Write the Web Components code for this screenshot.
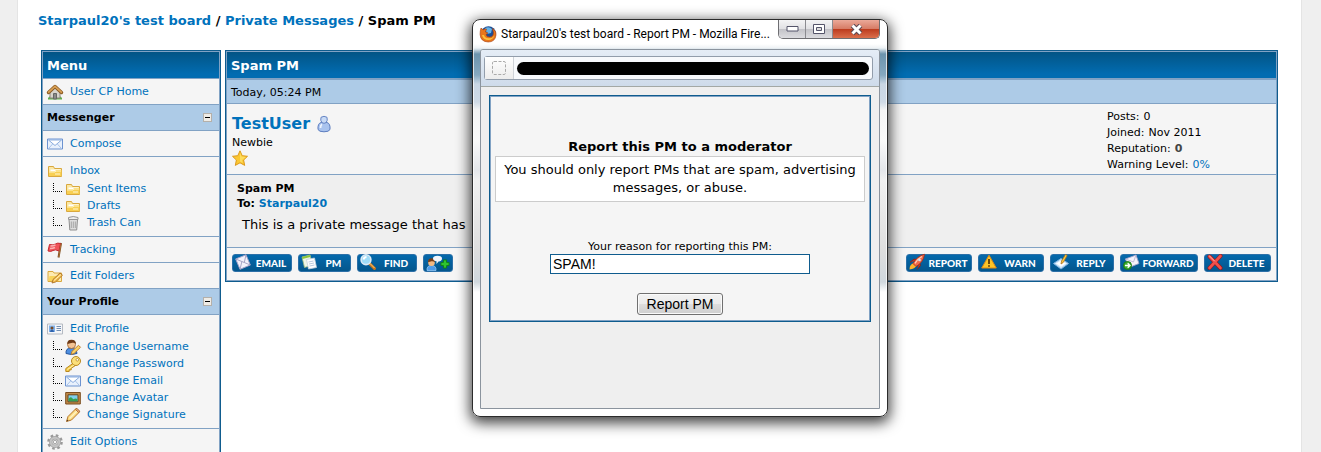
<!DOCTYPE html>
<html lang="en">
<head>
<meta charset="utf-8">
<meta name="viewport" content="width=device-width, initial-scale=1">
<title>Starpaul20's test board - Spam PM</title>
<style>
  body { margin: 0; background: #efefef; }
</style>
</head>
<body>
<mb-page>
  <mb-breadcrumb slot="nav">
    <a href="#board">Starpaul20's test board</a>
    <a href="#pms">Private Messages</a>
    <span>Spam PM</span>
  </mb-breadcrumb>

  <mb-panel slot="side">
    <span slot="title">Menu</span>
    <mb-cell><mb-link icon="home" href="#usercp">User CP Home</mb-link></mb-cell>
    <mb-section>Messenger</mb-section>
    <mb-cell><mb-link icon="mail" href="#compose">Compose</mb-link></mb-cell>
    <mb-cell tree>
      <mb-link icon="folder" href="#inbox">Inbox</mb-link>
      <mb-link sub icon="folder" href="#sent">Sent Items</mb-link>
      <mb-link sub icon="folder" href="#drafts">Drafts</mb-link>
      <mb-link sub icon="trash" href="#trash">Trash Can</mb-link>
    </mb-cell>
    <mb-cell><mb-link icon="flag" href="#tracking">Tracking</mb-link></mb-cell>
    <mb-cell><mb-link icon="folderEdit" href="#folders">Edit Folders</mb-link></mb-cell>
    <mb-section>Your Profile</mb-section>
    <mb-cell tree>
      <mb-link icon="card" href="#profile">Edit Profile</mb-link>
      <mb-link sub icon="userEdit" href="#username">Change Username</mb-link>
      <mb-link sub icon="key" href="#password">Change Password</mb-link>
      <mb-link sub icon="mail" href="#email">Change Email</mb-link>
      <mb-link sub icon="picture" href="#avatar">Change Avatar</mb-link>
      <mb-link sub icon="pencil" href="#signature">Change Signature</mb-link>
    </mb-cell>
    <mb-cell><mb-link icon="gear" href="#options">Edit Options</mb-link></mb-cell>
  </mb-panel>

  <mb-panel slot="main">
    <span slot="title">Spam PM</span>
    <mb-post date="Today, 05:24 PM" author="TestUser" rank="Newbie" subject="Spam PM" to="Starpaul20">
      This is a private message that has
      <mb-action slot="left" icon="letter" style="--w: 60px">EMAIL</mb-action>
      <mb-action slot="left" icon="notes" style="--w: 53px">PM</mb-action>
      <mb-action slot="left" icon="find" style="--w: 60px">FIND</mb-action>
      <mb-action slot="left" icon="buddyAdd" name="Add to buddy list" style="--w: 30px"></mb-action>
      <mb-action slot="right" icon="rocket" style="--w: 66px">REPORT</mb-action>
      <mb-action slot="right" icon="warn" style="--w: 66px">WARN</mb-action>
      <mb-action slot="right" icon="reply" style="--w: 64px">REPLY</mb-action>
      <mb-action slot="right" icon="forward" style="--w: 78px">FORWARD</mb-action>
      <mb-action slot="right" icon="cross" style="--w: 67px">DELETE</mb-action>
    </mb-post>
  </mb-panel>
</mb-page>

<mb-window>
  <span slot="title">Starpaul20's test board - Report PM - Mozilla Fire...</span>
  <mb-report-form></mb-report-form>
</mb-window>

<script>
(function () {
  'use strict';

  // 16x16 artwork, keyed by icon name
  const ICONS = {
    home: `
      <path d="M1 14q2-3 4-1h6q2-2 4 1v1.500H1z" fill="#5fae4c"/>
      <path d="M3 8l5-5 5 5v6H3z" fill="#d8d4cc" stroke="#8b857b"/>
      <path d="M6.500 9.500h3V15h-3z" fill="#8b8a88" stroke="#666"/>
      <path d="M1.500 8.500L8 2.500l6.500 6" fill="none" stroke="#8a5a22" stroke-width="3.400" stroke-linejoin="round" stroke-linecap="round"/>
      <path d="M1.700 8.200L8 2.400l6.300 5.800" fill="none" stroke="#d9a055" stroke-width="1.800" stroke-linecap="round"/>`,
    mail: `
      <path d="M.5 3h15v10H.5z" fill="#e9f1fc" stroke="#6c93d0"/>
      <path d="M2 12l4.500-5M14 12L9.500 7" stroke="#a9c3e8" fill="none"/>
      <path d="M1.500 4l6.500 5.500L14.500 4z" fill="#fff" stroke="#8badde"/>`,
    folder: `
      <path d="M1.500 3.500h5l1 2h7v8h-13z" fill="#fbe7a2" stroke="#d9a83e"/>
      <path d="M3.500 6.500h10v2h-10z" fill="#fff"/>
      <path d="M2 8.500h6l1-1.500h5.500v6H2z" fill="#f8cf52"/>
      <path d="M2 9h6l1-1h5" stroke="#fff3c0" fill="none"/>
      <path d="M8 11h5" stroke="#fff6d0"/>`,
    trash: `
      <path d="M4 4.500h8.500l-.8 10.500H4.800z" fill="#dedede" stroke="#8f8f8f"/>
      <path d="M6.300 6.500v6.500M8.300 6.500v6.500M10.300 6.500v6.500" stroke="#a4a4a4"/>
      <path d="M3.500 2.500q4.700-2 9.500 0v2H3.500z" fill="#ededed" stroke="#969696"/>`,
    flag: `
      <path d="M14 1L11.500 15.500" stroke="#7c4a1c" stroke-width="2"/>
      <path d="M13.500 1.500q-3-1-5 .5t-6 .5L1 9q3 1 5-.5t6 .5z" fill="#f0545a" stroke="#c32a30"/>
      <path d="M3.500 4q3 0 5-1.200M3 6.500q3 0 5-1" stroke="#fbb1b3" stroke-width="1.400" fill="none"/>
      <path d="M14 2l-2.300 13" stroke="#b27a3c" stroke-width=".8"/>`,
    folderEdit: `
      <path d="M1 3.500h5l1 1.500h7.500v8.500H1z" fill="#fdeab0" stroke="#d9a83e"/>
      <path d="M2.500 8h10l-1 5H1.500z" fill="#f8d45c"/>
      <path d="M5 15l1-3.500L13 5l2.500 2.200L8.500 14z" fill="#f6c04f" stroke="#a9702a" stroke-width=".9"/>
      <path d="M7 12.500L14 6.500" stroke="#fff0b8"/>`,
    card: `
      <path d="M.5 3h15v10H.5z" fill="#f5f6f8" stroke="#b5bac2"/>
      <path d="M2 4.500h6v6.500H2z" fill="#7fb1ea"/>
      <circle cx="5" cy="7" r="1.500" fill="#7a4b23"/>
      <path d="M3 11q0-2.500 2-2.500T7 11z" fill="#2f62ad"/>
      <path d="M9.500 5.500h4.500M9.500 7.500h4.500M9.500 9.500h4.500" stroke="#7590b4"/>`,
    userEdit: `
      <path d="M1 14.500q-.5-5.500 5-5.500t6 5.500q-5.500 2-11 0z" fill="#4c8ee0" stroke="#28589f"/>
      <circle cx="6.500" cy="5.500" r="4" fill="#f3c393" stroke="#a0622c" stroke-width=".8"/>
      <path d="M2.300 5Q2 .7 6.500.7T11 5Q9.500 3.500 7.500 3.700T2.300 5z" fill="#6f3b18"/>
      <path d="M6 15.500l1-3.200 6.500-6 2 2-6.400 6.200z" fill="#fbd264" stroke="#b2742a" stroke-width=".9"/>`,
    key: `
      <path d="M8.500 7L.8 12.500v3h3.400v-1.600h2v-1.600l4.500-3z" fill="#f7cf4d" stroke="#b98820"/>
      <circle cx="11" cy="5" r="4.500" fill="#fbe07a" stroke="#b98820"/>
      <circle cx="12.300" cy="3.800" r="1.300" fill="#fff" stroke="#b98820" stroke-width=".8"/>
      <path d="M2.500 13.500L9 9" stroke="#fff2b5"/>`,
    picture: `
      <path d="M.7 2.500h14.600v11.500H.7z" fill="#c08a48" stroke="#7b4e20"/>
      <path d="M3 4.800h10v7H3z" fill="#7ed0ee" stroke="#6b4318"/>
      <path d="M3.500 9q2-3 4-.5l1 .8q2-1.800 4 0v2h-9z" fill="#35a052"/>`,
    pencil: `
      <path d="M1.500 14.500L3 9.500 11 1.500l3.500 3.500L6.500 13z" fill="#fbd97c" stroke="#b5772e"/>
      <path d="M4.500 11.500l8-8" stroke="#fff3c4" stroke-width="1.400"/>
      <path d="M10.500 2.500l1.300-1.300 3 3-1.300 1.300z" fill="#e8aa70" stroke="#a5622b" stroke-width=".8"/>
      <path d="M1.500 14.500l.7-2 1.300 1.300z" fill="#503a28"/>`,
    gear: `
      <circle cx="8" cy="8" r="6.500" fill="none" stroke="#999" stroke-width="2.600" stroke-dasharray="2.550"/>
      <circle cx="8" cy="8" r="4.300" fill="none" stroke="#a3a3a3" stroke-width="3.400"/>
      <circle cx="8" cy="8" r="4.300" fill="none" stroke="#c4c4c4" stroke-width="2"/>
      <circle cx="8" cy="8" r="1.800" fill="#f5f5f5" stroke="#8c8c8c" stroke-width=".8"/>`,
    user: `
      <path d="M2 13.500q-.5-6 3-7h6q3.500 1 3 7-1 2.300-6 2.300T2 13.500z" fill="#a9c3ee" stroke="#5c7dbf"/>
      <path d="M5 1.300q3-2 6 0 1 3.200-1 5.400-2 1.200-4 0Q4 4.500 5 1.300z" fill="#c9dbf6" stroke="#6685c4"/>
      <path d="M4.500 12q0-3 1.500-3.800" stroke="#eef4fd" stroke-width="1.800" fill="none"/>`,
    star: `
      <path d="M8 .8l2.200 4.900 5.300.6-3.900 3.700 1.100 5.400L8 12.800l-4.700 2.600 1.100-5.400L.5 6.300l5.300-.6z" fill="#fbc832" stroke="#dd9a1c"/>
      <path d="M8 2.500l1.500 4 4.500.5-4 3 .8 3L8 11.500z" fill="#fddc5e"/>`,
    firefox: `
      <circle cx="8.500" cy="7.500" r="7.300" fill="#1d4e96"/>
      <path d="M5 2q4-2 7 1l-1 4-4 1z" fill="#62b2e8"/>
      <path d="M1 2l2 2Q4.500 2.500 6.500 3L5.500 6l2.500 1-2 1.500q.5 2.500 3.500 2.500 4 0 4-4.500L12.500 2.500q3.800 2 3.500 6.500-.8 7-7.800 7Q.5 15.700.1 8.500 0 5 1 2z" fill="#e8761b" stroke="#a63e10" stroke-width=".6"/>
      <path d="M2 9q1 5 6.500 5 4.500-.2 6-4.500-2 3-6 2.700T4 9z" fill="#fbc03a"/>`,
    letter: `
      <path d="M.7 5L11 .8 15.300 11 5 15.300z" fill="#f4f2fb" stroke="#a5a2c8"/>
      <path d="M.7 5l8.600 3.500L11 .8M5 15.300l1.800-7.500M15.300 11L9.300 8.500" fill="none" stroke="#9390b8" stroke-width=".8"/>`,
    notes: `
      <path d="M1 3l8-2 2.500 10-8 2.500z" fill="#eef5e6" stroke="#9dbb7c" stroke-width=".8"/>
      <path d="M1 3l8-2 .5 2-8 2z" fill="#8cc63e"/>
      <path d="M5.500 5.500L13.500 4l2 9.500-8 1.500z" fill="#fff" stroke="#c4d0dc" stroke-width=".8"/>
      <path d="M7.500 8l5-1M8 10l5-1M8.500 12l5-1" stroke="#a9bed6" stroke-width=".8"/>`,
    find: `
      <path d="M9.500 9.500l5 5" stroke="#c9771d" stroke-width="3" stroke-linecap="round"/>
      <path d="M10 9.500l4.500 4.500" stroke="#fbd07c" stroke-width="1"/>
      <circle cx="6" cy="5.700" r="4.900" fill="#9fdcf8" stroke="#dceaf6" stroke-width="1.600"/>
      <path d="M3.500 5.500Q4 3 6.500 3" stroke="#fff" stroke-width="1.800" fill="none"/>`,
    buddyAdd: `
      <path d="M1 15.500q-.5-5 4.500-5t4.500 5z" fill="#4d9bea" stroke="#9fd0fa" stroke-width=".7"/>
      <circle cx="5.500" cy="7.800" r="3.300" fill="#f3b983"/>
      <path d="M2 7.300q0-4 3.500-4T9 7.300Q7 5.800 5.500 6.300T2 7.300z" fill="#7a3d16"/>
      <path d="M7 3.500Q7 .8 11.500.8T16 3.500 12.500 6.500L10.500 9V6.300Q7 5.800 7 3.500z" fill="#f2f6fc"/>`,
    rocket: `
      <path d="M.5 15.500Q.5 10 5 9l2.500 2.500q-1.500 3.500-7 4z" fill="#ffb32c"/>
      <path d="M1 8.500L5 5l3 1M8 15.500l3.500-4-1-2.500" fill="#c9301c" stroke="#8d1d10" stroke-width=".8"/>
      <path d="M4 9.500Q8 2 15.500.3 14.500 8.500 7 12.500z" fill="#f2694a" stroke="#a32c16" stroke-width=".8"/>
      <path d="M6 9.300Q9 4.500 13 2.500" stroke="#ffd1b8" stroke-width="1.300" fill="none"/>
      <circle cx="10.500" cy="6" r="1.300" fill="#cfe7fa"/>`,
    warn: `
      <path d="M8 1.200L15.300 14H.7z" fill="#fdc527" stroke="#e08a12" stroke-linejoin="round"/>
      <path d="M8 5v5M8 11.200v1.600" stroke="#5b3a08" stroke-width="1.800"/>`,
    reply: `
      <path d="M.5 9.500l7.500-5 7.500 5L8 15z" fill="#c8e2f8" stroke="#7db0dd"/>
      <path d="M3 9.500L8 6.500l5 3-5 3.300z" fill="#fff"/>
      <path d="M12.500.5L8.500 7 8 10l2.200-1.500L14.200 1.500z" fill="#fbc842" stroke="#a96e1a" stroke-width=".8"/>`,
    forward: `
      <path d="M2.500 5L13 1l3 8.500-10 4z" fill="#f4f2fb" stroke="#a5a2c8" stroke-width=".9"/>
      <path d="M2.500 5l8 3L13 1" fill="none" stroke="#b9b6d4" stroke-width=".9"/>
      <circle cx="4.500" cy="11.500" r="4" fill="#3cae2e" stroke="#1c7a15"/>
      <path d="M2 11.500h4.500M4.700 9.300l2.200 2.200-2.200 2.200" stroke="#fff" stroke-width="1.400" fill="none"/>`,
    cross: `
      <path d="M2.500 2.500l11 11.500M13.500 2L2.500 14" stroke="#a01616" stroke-width="4" stroke-linecap="round"/>
      <path d="M2.500 2.500l11 11.500M13.500 2L2.500 14" stroke="#f0504c" stroke-width="2.600" stroke-linecap="round"/>
      <path d="M2.500 2l5 5" stroke="#ffb4ae" stroke-width="1" stroke-linecap="round"/>`,
    plus: `
      <path d="M5.500 1.500h5v4h4v5h-4v4h-5v-4h-4v-5h4z" fill="#2fc52f" stroke="#0f7f18" stroke-width="1.500"/>`
  };

  const define = (name, markup, setup) => {
    const tpl = document.createElement('template');
    tpl.innerHTML = markup;
    customElements.define(name, class extends HTMLElement {
      constructor() {
        super();
        this.attachShadow({ mode: 'open' }).appendChild(tpl.content.cloneNode(true));
      }
      connectedCallback() { if (setup) setup(this, this.shadowRoot); }
    });
  };

  define('mb-icon', `
    <style>
      :host { display: inline-block; width: 16px; height: 16px; flex: none; }
      svg { display: block; width: 100%; height: 100%; overflow: visible; }
    </style>
    <svg viewBox="0 0 16 16" fill="none" aria-hidden="true"></svg>`,
  (el, root) => {
    root.querySelector('svg').innerHTML = ICONS[el.getAttribute('name')] || '';
  });

  define('mb-page', `
    <style>
      :host {
        display: block;
        box-sizing: border-box;
        height: 100vh;
        overflow: hidden;
        margin: 0 19px 0 17px;
        padding: 13px 23px 0;
        background: #fff;
        border: 1px solid #e4e4e4;
        border-width: 0 1px;
        font: 11px/16px "DejaVu Sans", Verdana, sans-serif;
        color: #000;
      }
      .cols {
        display: grid;
        grid-template-columns: 180px minmax(0, 1fr);
        gap: 4px;
        align-items: start;
        margin-top: 21px;
      }
    </style>
    <slot name="nav"></slot>
    <div class="cols">
      <nav><slot name="side"></slot></nav>
      <main><slot name="main"></slot></main>
    </div>`);

  define('mb-breadcrumb', `
    <style>
      :host { display: block; margin-left: -3px; font-size: 13px; font-weight: bold; line-height: 16px; }
      ::slotted(a) { color: #0072bc; text-decoration: none; }
      ::slotted(a)::after { content: " /"; color: #000; }
    </style>
    <slot></slot>`);

  define('mb-panel', `
    <style>
      :host {
        display: grid;
        gap: 1px;
        padding: 1px;
        background: #81a2c4;
        border: 1px solid #0f5c8e;
      }
      h2 {
        margin: 0;
        padding: 6px 4px 4px;
        font-size: 13px;
        line-height: 16px;
        color: #fff;
        background: linear-gradient(#025485, #026cb1 85%);
      }
    </style>
    <h2><slot name="title"></slot></h2>
    <slot></slot>`);

  define('mb-section', `
    <style>
      :host {
        display: flex;
        align-items: center;
        justify-content: space-between;
        padding: 0 7px 0 4px;
        height: 25px;
        background: #adcbe7;
        font-weight: bold;
      }
      button {
        display: grid;
        place-items: center;
        box-sizing: border-box;
        width: 9px;
        height: 9px;
        padding: 0;
        border: 1px solid #b4b0aa;
        background: #efece6;
      }
      button::before { content: ""; width: 5px; height: 1px; background: #000; }
    </style>
    <slot></slot>
    <button type="button" aria-label="Collapse"></button>`);

  define('mb-cell', `
    <style>
      :host { display: block; padding: 4px 4px 3px; background: #f5f5f5; }
      :host([tree]) { padding-top: 5px; padding-bottom: 5px; }
    </style>
    <slot></slot>`);

  define('mb-link', `
    <style>
      :host { display: flex; align-items: center; height: 18px; }
      :host([sub]) { height: 17px; padding-left: 6px; }
      a { display: flex; align-items: center; gap: 7px; color: #0072bc; text-decoration: none; }
      :host([sub]) a { gap: 6px; }
      .twig { display: none; width: 8px; height: 8px; margin: 0 3px 3px 0; border: 1px dotted #000; border-width: 0 0 1px 1px; }
      :host([sub]) .twig { display: block; }
    </style>
    <span class="twig"></span>
    <a><span class="art"></span><span><slot></slot></span></a>`,
  (el, root) => {
    root.querySelector('a').href = el.getAttribute('href');
    root.querySelector('.art').innerHTML = `<mb-icon name="${el.getAttribute('icon')}" style="display: block"></mb-icon>`;
  });

  define('mb-action', `
    <style>
      :host { display: block; width: var(--w); }
      button {
        display: flex;
        align-items: center;
        width: 100%;
        height: 18px;
        padding: 0 0 0 2px;
        border: 1px solid #2c70a8;
        border-radius: 3px;
        background: linear-gradient(#0469ac, #04568c);
        color: #fff;
        font: 900 10px/16px Lato, "Open Sans", sans-serif;
      }
      mb-icon { margin-top: -3px; }
      .label { flex: 1; text-align: center; }
      .plus { display: none; width: 10px; height: 10px; margin: 2px 0 0 -2px; }
      :host([name]) .plus { display: block; }
      :host([name]) .label { display: none; }
      :host([name]) mb-icon:not(.plus) { margin-top: 0; }
    </style>
    <button type="button">
      <span class="art"></span>
      <span class="label"><slot></slot></span>
    </button>`,
  (el, root) => {
    const name = el.getAttribute('icon');
    root.querySelector('.art').outerHTML = `<mb-icon name="${name}"></mb-icon><mb-icon class="plus" name="plus"></mb-icon>`;
    if (el.hasAttribute('name')) root.querySelector('button').setAttribute('aria-label', el.getAttribute('name'));
  });

  define('mb-post', `
    <style>
      :host { display: grid; gap: 1px; }
      a { color: #0072bc; text-decoration: none; }
      .date { padding: 5px 4px 3px; background: #adcbe7; border-top: 1px solid #81a2c4; line-height: 15px; }
      .author { display: flex; justify-content: space-between; padding: 5px 5px 1px; background: #f5f5f5; }
      .who { display: flex; align-items: center; gap: 6px; height: 30px; margin-bottom: -4px; font-size: 16px; font-weight: bold; }
      .rank { line-height: 15px; }
      .stars { display: block; }
      .stats { width: 164px; margin: 0; }
      .stats div { display: flex; gap: 4px; }
      dd { margin: 0; }
      dd b { color: #444; }
      .body { padding: 6px 10px 14px; background: #efefef; line-height: 15px; }
      .body strong { display: block; }
      .text { margin: 6px 5px 0; font-size: 13px; line-height: 16px; }
      .tools { display: flex; justify-content: space-between; padding: 6px 5px 8px; background: #f5f5f5; }
      .set { display: flex; gap: 6px; }
    </style>
    <div class="date"></div>
    <div class="author">
      <div>
        <div class="who"><a class="name" href="#user"></a><mb-icon name="user"></mb-icon></div>
        <div class="rank"></div>
        <mb-icon class="stars" name="star"></mb-icon>
      </div>
      <dl class="stats">
        <div><dt>Posts:</dt><dd>0</dd></div>
        <div><dt>Joined:</dt><dd>Nov 2011</dd></div>
        <div><dt>Reputation:</dt><dd><b>0</b></dd></div>
        <div><dt>Warning Level:</dt><dd><a href="#warnings">0%</a></dd></div>
      </dl>
    </div>
    <div class="body">
      <strong class="subject"></strong>
      <strong>To: <a class="to" href="#to"></a></strong>
      <div class="text"><slot></slot></div>
    </div>
    <div class="tools">
      <div class="set"><slot name="left"></slot></div>
      <div class="set"><slot name="right"></slot></div>
    </div>`,
  (el, root) => {
    const fill = (sel, attr) => { root.querySelector(sel).textContent = el.getAttribute(attr); };
    fill('.date', 'date');
    fill('.name', 'author');
    fill('.rank', 'rank');
    fill('.subject', 'subject');
    fill('.to', 'to');
  });

  define('mb-window', `
    <style>
      :host {
        position: absolute;
        top: 19px;
        left: 472px;
        box-sizing: border-box;
        width: 416px;
        padding: 0 7px 7px;
        border: 1px solid #2b2b2b;
        border-radius: 8px;
        background: linear-gradient(#fff 24px, #eef2f5 28px, #6c94ad 34px, #85a8c0 55px, #c9d6e4 64px, #cfdae6 82px, #f4f4f4 90px, #fafafa 120px, #e4e6ea 150px, #f0f0f0 160px, #dedede 230px, #d0d8de 262px, #fff 272px);
        box-shadow: 0 4px 14px 2px rgba(0, 0, 0, .75), inset 0 0 0 1px rgba(255, 255, 255, .7);
        color: #000;
      }
      header { display: flex; align-items: flex-start; height: 29px; font: 12px/28px Roboto, "Open Sans", sans-serif; }
      header mb-icon { margin: 6px 5px 0 0; }
      .title { flex: 1; min-width: 0; white-space: nowrap; }
      .controls { display: flex; border: 1px solid #6e6e72; border-top: 0; border-radius: 0 0 5px 5px; overflow: hidden; }
      button {
        display: grid;
        place-items: center;
        width: 27px;
        height: 18px;
        padding: 0;
        border: 0;
        border-right: 1px solid #8b8b90;
        background: linear-gradient(#f4f4f5, #e0e0e3 50%, #c2c2c7 50%, #dcdce0);
      }
      button.close { width: 46px; border: 0; background: linear-gradient(#eba999, #d67a64 50%, #bb3a1d 50%, #db6f4c); }
      button svg { display: block; }
      .client { border: 1px solid #8b949e; border-radius: 3px 3px 0 0; background: #efefef; }
      .bar { padding: 6px 6px 6px 3px; background: linear-gradient(#e5edf6, #cedbea); border-bottom: 1px solid #a3a8a5; border-radius: 2px 2px 0 0; }
      .url { display: flex; align-items: center; height: 22px; border: 1px solid #929dab; border-radius: 3px; background: #f7f9fc; }
      .ident { display: grid; place-items: center; width: 28px; height: 22px; border-right: 1px solid #cfd3d8; background: linear-gradient(#fff, #ececec); }
      .redact { flex: 1; height: 13px; margin: 0 3px; border-radius: 7px; background: #000; }
      .view { min-height: 305px; padding: 8px; }
    </style>
    <header>
      <mb-icon name="firefox"></mb-icon>
      <span class="title"><slot name="title"></slot></span>
      <div class="controls">
        <button type="button" aria-label="Minimize"><svg width="13" height="6" viewBox="0 0 13 6"><path d="M1 .5h11v4.500H1z" fill="#fff" stroke="#55556a"/></svg></button>
        <button type="button" aria-label="Maximize"><svg width="13" height="11" viewBox="0 0 13 11"><path d="M.5.500h11v9H.5z" fill="#fff" stroke="#55556a"/><path d="M3.500 3.500h5v3h-5z" fill="#ddd" stroke="#55556a"/></svg></button>
        <button type="button" class="close" aria-label="Close"><svg width="13" height="11" viewBox="0 0 13 11"><path d="M2.500 1.500l8 8M10.500 1.500l-8 8" stroke="#5b4a54" stroke-width="5"/><path d="M2.500 1.500l8 8M10.500 1.500l-8 8" stroke="#fff" stroke-width="3"/></svg></button>
      </div>
    </header>
    <div class="client">
      <div class="bar">
        <div class="url">
          <span class="ident"><svg width="14" height="14" viewBox="0 0 14 14"><rect x=".5" y=".5" width="13" height="13" rx="1.500" fill="none" stroke="#aaa" stroke-dasharray="3 1.500"/></svg></span>
          <span class="redact"></span>
        </div>
      </div>
      <div class="view"><slot></slot></div>
    </div>`);

  define('mb-report-form', `
    <style>
      :host { display: block; font: 11px/14px "DejaVu Sans", Verdana, sans-serif; text-align: center; }
      form {
        display: flex;
        flex-direction: column;
        align-items: center;
        padding: 42px 5px 6px;
        border: 1px solid #0f5c8e;
        box-shadow: inset 0 0 0 1px #81a2c4;
        background: #f5f5f5;
      }
      h1 { margin: 0; font-size: 13px; line-height: 18px; }
      p { box-sizing: border-box; width: 100%; margin: 0 0 38px; padding: 4px 0; border: 1px solid #ccc; background: #fff; font-size: 13px; line-height: 18px; }
      input {
        box-sizing: border-box;
        width: 260px;
        height: 20px;
        padding: 0 2px;
        border: 1px solid #0f5c8e;
        background: #fff;
        font: 14px "Liberation Sans", Arial, sans-serif;
      }
      button {
        margin-top: 19px;
        height: 22px;
        padding: 0 9px;
        border: 1px solid #707070;
        border-radius: 3px;
        box-shadow: inset 0 0 0 1px #fafafa;
        background: linear-gradient(#f2f2f2, #ebebeb 50%, #dddddd 50%, #cfcfcf);
        font: 14px "Liberation Sans", Arial, sans-serif;
        color: #000;
      }
    </style>
    <form>
      <h1>Report this PM to a moderator</h1>
      <p>You should only report PMs that are spam, advertising messages, or abuse.</p>
      <label for="reason">Your reason for reporting this PM:</label>
      <input id="reason" type="text" value="SPAM!">
      <button type="button">Report PM</button>
    </form>`);
})();
</script>
</body>
</html>
